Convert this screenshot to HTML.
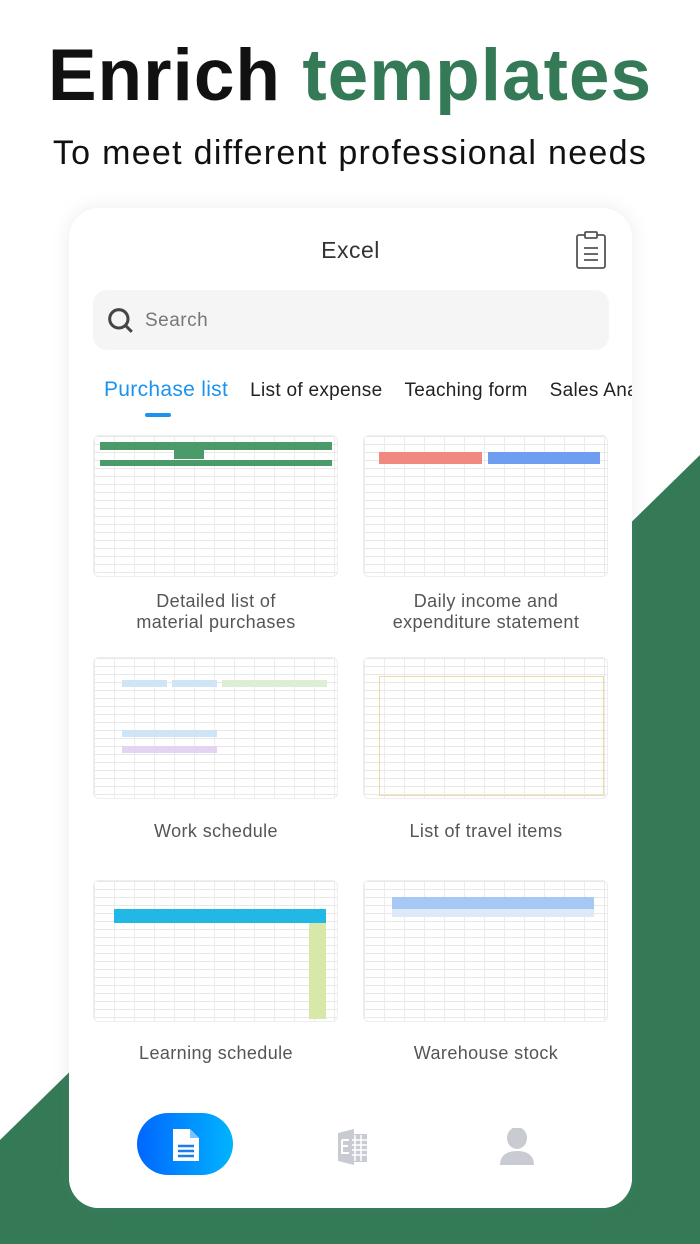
<!DOCTYPE html>
<html><head><meta charset="utf-8"><style>
*{margin:0;padding:0;box-sizing:border-box}
body{width:700px;height:1244px;background:#fff;position:relative;overflow:hidden;font-family:"Liberation Sans","Noto Sans CJK SC",sans-serif}
.bg{position:absolute;left:0;top:0}
h1{position:absolute;top:34px;left:0;width:700px;text-align:center;font-size:73px;font-weight:700;color:#111;letter-spacing:1px}
h1 span{color:#347a56}
.sub{position:absolute;top:134px;width:700px;text-align:center;font-size:34px;color:#111;letter-spacing:1.3px}
.card{position:absolute;left:69px;top:208px;width:563px;height:1000px;background:#fff;border-radius:30px;box-shadow:0 0 18px rgba(120,130,160,.15);overflow:hidden}
.title{position:absolute;top:29px;width:100%;text-align:center;font-size:23px;color:#333;letter-spacing:.5px}
.search{position:absolute;left:24px;top:82px;width:516px;height:60px;background:#f5f5f5;border-radius:14px}
.search span{position:absolute;left:52px;top:20px;font-size:19px;color:#777;letter-spacing:.5px}
.tabs{position:absolute;top:170px;left:35px;white-space:nowrap;font-size:19px;color:#222;letter-spacing:.3px}
.tabs b{font-weight:400;color:#1a93f0;font-size:21px;margin-right:22px}
.tabs i{font-style:normal;margin-right:22px}
.ul{position:absolute;left:76px;top:205px;width:26px;height:4px;border-radius:2px;background:#1a93f0}
.th{position:absolute;width:245px;height:142px;border:1px solid #eee;border-radius:6px;background:#fff;overflow:hidden}
.th .g{position:absolute;inset:0;background-image:linear-gradient(#e8e8e8 1px,transparent 1px),linear-gradient(90deg,#ececec 1px,transparent 1px);background-size:100% 8px,20px 100%}
.lb{position:absolute;width:270px;text-align:center;font-size:18px;color:#555;line-height:21px;letter-spacing:.4px}
.nav{position:absolute;left:0;top:897px;width:563px;height:103px;background:#fff}
</style></head><body>
<svg class="bg" width="700" height="1244"><polygon points="700,455 700,1244 0,1244 0,1140" fill="#347a56"/></svg>
<h1>Enrich <span>templates</span></h1>
<div class="sub">To meet different professional needs</div>
<div class="card">
<div class="title">Excel</div>
<svg style="position:absolute;left:506px;top:22px" width="32" height="40" viewBox="0 0 32 40" fill="none" stroke="#555" stroke-width="1.8"><rect x="2" y="5" width="28" height="33" rx="2"/><rect x="10" y="2" width="12" height="6" rx="1" fill="#fff"/><path d="M9 18h14M9 24h14M9 30h14"/></svg>
<div class="search"><svg style="position:absolute;left:14px;top:17px" width="28" height="28" viewBox="0 0 26 26" fill="none" stroke="#444" stroke-width="2.8"><circle cx="11" cy="11" r="8.5"/><path d="M17 17l6 6"/></svg><span>Search</span></div>
<div class="tabs"><b>Purchase list</b><i>List of expense</i><i>Teaching form</i><i>Sales Analysis</i></div>
<div class="ul"></div>

<div class="th" style="left:24px;top:227px"><div class="g"></div><div style="position:absolute;left:6px;top:6px;width:232px;height:8px;background:#4a9a6a"></div><div style="position:absolute;left:6px;top:24px;width:232px;height:6px;background:#4a9a6a"></div><div style="position:absolute;left:80px;top:14px;width:30px;height:9px;background:#4a9a6a"></div></div>
<div class="th" style="left:294px;top:227px"><div class="g"></div><div style="position:absolute;left:15px;top:16px;width:103px;height:12px;background:#f08a80"></div><div style="position:absolute;left:124px;top:16px;width:112px;height:12px;background:#6f9ef0"></div></div>
<div class="lb" style="left:12px;top:383px">Detailed list of<br>material purchases</div>
<div class="lb" style="left:282px;top:383px">Daily income and<br>expenditure statement</div>

<div class="th" style="left:24px;top:449px"><div class="g"></div><div style="position:absolute;left:28px;top:22px;width:45px;height:7px;background:#cfe4f4"></div><div style="position:absolute;left:78px;top:22px;width:45px;height:7px;background:#cfe4f4"></div><div style="position:absolute;left:128px;top:22px;width:105px;height:7px;background:#dcefd4"></div><div style="position:absolute;left:28px;top:72px;width:95px;height:7px;background:#cfe4f4"></div><div style="position:absolute;left:28px;top:88px;width:95px;height:7px;background:#e4d4f4"></div></div>
<div class="th" style="left:294px;top:449px"><div class="g"></div><div style="position:absolute;left:15px;top:18px;width:225px;height:120px;border:1px solid #f0d8a8"></div></div>
<div class="lb" style="left:12px;top:613px">Work schedule</div>
<div class="lb" style="left:282px;top:613px">List of travel items</div>

<div class="th" style="left:24px;top:672px"><div class="g"></div><div style="position:absolute;left:20px;top:28px;width:212px;height:14px;background:#22b8e6"></div><div style="position:absolute;left:215px;top:42px;width:17px;height:96px;background:#d8e8a8"></div></div>
<div class="th" style="left:294px;top:672px"><div class="g"></div><div style="position:absolute;left:28px;top:16px;width:202px;height:12px;background:#a8c8f4"></div><div style="position:absolute;left:28px;top:28px;width:202px;height:8px;background:#dde8f8"></div></div>
<div class="lb" style="left:12px;top:835px">Learning schedule</div>
<div class="lb" style="left:282px;top:835px">Warehouse stock</div>

<div class="nav">
<div style="position:absolute;left:68px;top:8px;width:96px;height:62px;border-radius:31px;background:linear-gradient(90deg,#0066ff,#00b4ff)"></div>
<svg style="position:absolute;left:102px;top:22px" width="30" height="36" viewBox="0 0 30 36"><path d="M2 2h17l9 9v23H2z" fill="#fff"/><path d="M19 2v9h9" fill="#7cc4ff"/><path d="M7 19h16M7 24h16M7 29h16" stroke="#1a7cf0" stroke-width="2.5"/></svg>
<svg style="position:absolute;left:266px;top:22px" width="34" height="40" viewBox="0 0 34 40"><path d="M3 6l16-4v36L3 34z" fill="#c8ccd2"/><rect x="14" y="7" width="18" height="28" fill="#c8ccd2"/><path d="M7 13h7M7 13v13h7M7 19h6" stroke="#fff" stroke-width="2" fill="none"/><path d="M20 8v26M26 8v26M17 13h15M17 18h15M17 23h15M17 28h15" stroke="#fff" stroke-width="1.5"/></svg>
<svg style="position:absolute;left:430px;top:23px" width="36" height="38" viewBox="0 0 36 38"><ellipse cx="18" cy="10" rx="10" ry="11" fill="#c8ccd2"/><path d="M1 37c0-9 6-14 17-14s17 5 17 14z" fill="#c8ccd2"/></svg>
</div>
</div>
</body></html>
